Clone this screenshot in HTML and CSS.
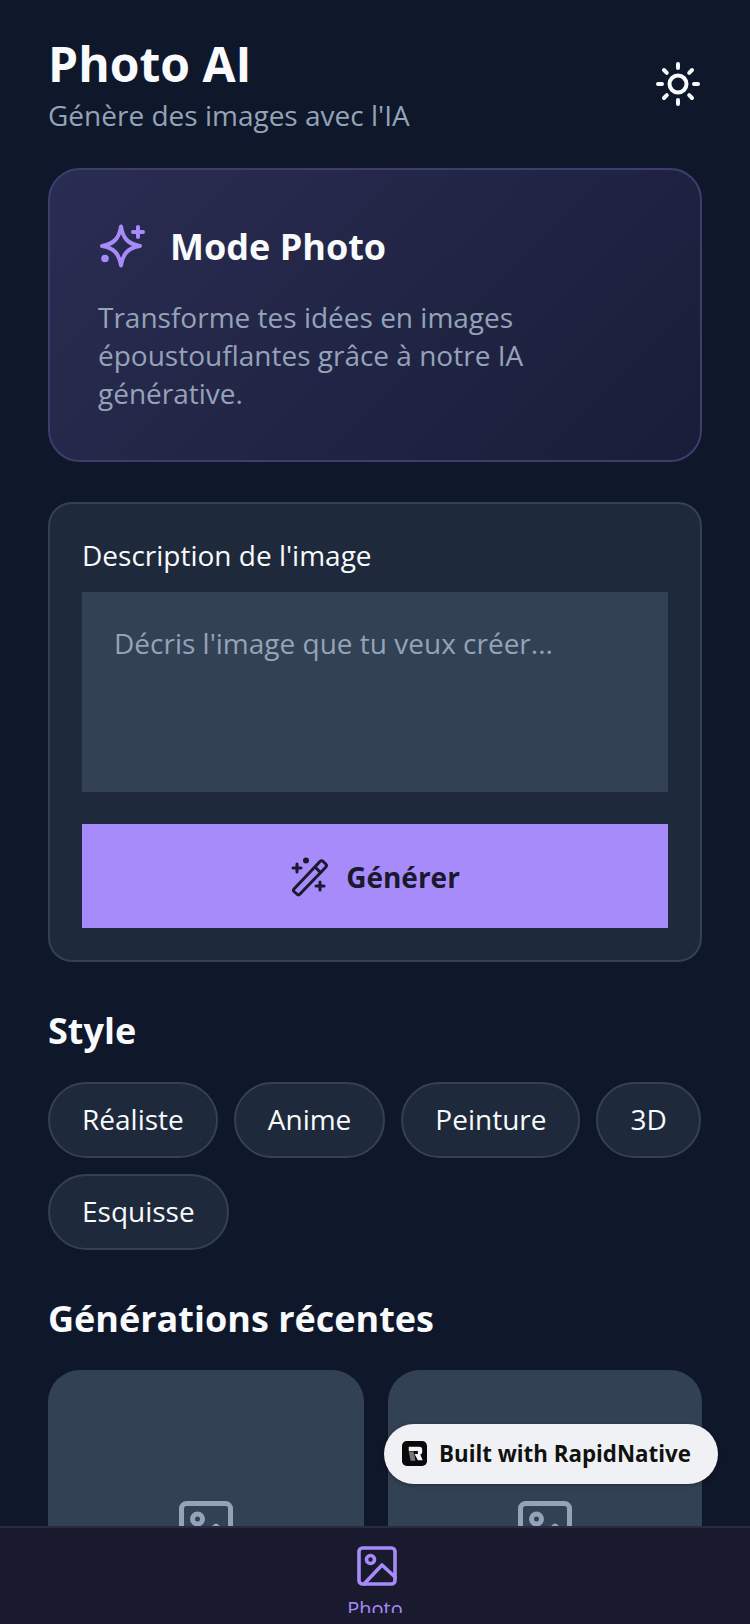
FILE: index.html
```html
<!DOCTYPE html>
<html lang="fr">
<head>
    <meta charset="UTF-8">
    <meta name="viewport" content="width=device-width, initial-scale=1.0">
    <title>Photo AI</title>
    <link rel="stylesheet" href="styles.css">
</head>
<body>
    <div class="app">
        <main class="content">
            <header class="header">
                <div>
                    <h1 class="title">Photo AI</h1>
                    <p class="subtitle">Génère des images avec l'IA</p>
                </div>
                <svg class="sun-icon" viewBox="0 0 48 48" fill="none" stroke="#f8fafc" stroke-width="4" stroke-linecap="round">
                    <circle cx="24" cy="24" r="8.500"/>
                    <path d="M24 4v4M24 40v4M4 24h4M40 24h4M10 10l2.800 2.800M35.200 35.200l2.800 2.800M10 38l2.800-2.800M35.200 12.800l2.800-2.800"/>
                </svg>
            </header>

            <section class="hero">
                <div class="hero-head">
                    <svg class="spark-icon" viewBox="0 0 48 48" fill="none" stroke="#a78bfa" stroke-width="4" stroke-linecap="round" stroke-linejoin="round">
                        <path d="M23 3.500c2 12 7 17.500 19 19.500-12 2-17 7.500-19 19.500-2-12-7-17.500-19-19.500 12-2 17-7.500 19-19.500z"/>
                        <path d="M40 4v10M35 9h10"/>
                        <circle cx="7" cy="35.500" r="1.800" fill="#a78bfa"/>
                    </svg>
                    <h2 class="hero-title">Mode Photo</h2>
                </div>
                <p class="hero-text">Transforme tes idées en images époustouflantes grâce à notre IA générative.</p>
            </section>

            <section class="prompt-card">
                <label class="prompt-label">Description de l'image</label>
                <div class="prompt-input">Décris l'image que tu veux créer...</div>
                <button class="generate-btn">
                    <svg class="wand-icon" viewBox="0 0 40 40" fill="none" stroke="#1a1a2e" stroke-width="3" stroke-linecap="round" stroke-linejoin="round">
                        <path d="M4 32L30 4.500c1-1 2.200-1 3.200 0l2.500 2.500c1 1 1 2.200 0 3.200L10 37c-1 1-2.200 1-3.200 0l-2.800-2.500c-.8-.8-.8-1.700 0-2.500z"/>
                        <path d="M25 10l5.500 5.500"/>
                        <path d="M7 7v8M3 11h8M30 25v8M26 29h8"/>
                        <circle cx="16" cy="3.500" r="1.500" fill="#1a1a2e"/>
                    </svg>
                    <span>Générer</span>
                </button>
            </section>

            <h2 class="section-title style-title">Style</h2>
            <div class="chips">
                <span class="chip">Réaliste</span>
                <span class="chip">Anime</span>
                <span class="chip">Peinture</span>
                <span class="chip">3D</span>
                <span class="chip">Esquisse</span>
            </div>

            <h2 class="section-title recent-title">Générations récentes</h2>
            <div class="recent-grid">
                <div class="recent-card">
                    <svg class="thumb-icon" viewBox="0 0 54 54" fill="none" stroke="#94a3b8" stroke-width="5" stroke-linejoin="round">
                        <rect x="2.500" y="2.500" width="49" height="49" rx="5"/>
                        <circle cx="18.500" cy="18" r="5"/>
                        <path d="M8 50l29-25 15 13"/>
                    </svg>
                </div>
                <div class="recent-card">
                    <svg class="thumb-icon" viewBox="0 0 54 54" fill="none" stroke="#94a3b8" stroke-width="5" stroke-linejoin="round">
                        <rect x="2.500" y="2.500" width="49" height="49" rx="5"/>
                        <circle cx="18.500" cy="18" r="5"/>
                        <path d="M8 50l29-25 15 13"/>
                    </svg>
                </div>
            </div>
        </main>

        <div class="built-badge">
            <span class="built-logo">
                <svg viewBox="0 0 26 26" width="25" height="25">
                    <rect width="26" height="26" rx="5" fill="#0a0a0a"/>
                    <path d="M7 6h11c2 0 3 1 3 3v2.500c0 1.500-1 2.300-2 2.500l2.500 6h-5L13 13.500h3.500V10.500H7z" fill="#f5f5f5"/>
                    <path d="M7 11h5l2 9.500H9z" fill="#777"/>
                </svg>
            </span>
            <span>Built with RapidNative</span>
        </div>

        <nav class="tabbar">
            <svg class="tab-icon" viewBox="0 0 40 40" fill="none" stroke="#a78bfa" stroke-width="3.600" stroke-linecap="round" stroke-linejoin="round">
                <rect x="2" y="2" width="36" height="36" rx="3.500"/>
                <circle cx="13.500" cy="13.500" r="4"/>
                <path d="M7 38l18-19 13 12"/>
            </svg>
            <span class="tab-label">Photo</span>
        </nav>
    </div>
</body>
</html>
```

FILE: styles.css
```css
* {
    box-sizing: border-box;
}
body {
    margin: 0;
    background: #0f172a;
    font-family: "Open Sans", "Noto Sans", sans-serif;
}
.app {
    position: relative;
    width: 750px;
    height: 1624px;
    display: flex;
    flex-direction: column;
    overflow: hidden;
}
.content {
    flex: 1;
    min-height: 0;
    overflow: hidden;
    padding: 32px 48px 0;
}
.header {
    display: flex;
    justify-content: space-between;
    align-items: center;
}
.title {
    margin: 0;
    font-size: 48px;
    line-height: 64px;
    font-weight: 700;
    color: #f8fafc;
}
.subtitle {
    margin: 0;
    font-size: 28px;
    line-height: 38px;
    color: #94a3b8;
}
.sun-icon {
    width: 48px;
    height: 48px;
    margin-top: 2px;
}
.hero {
    margin-top: 34px;
    height: 294px;
    padding: 53px 48px 0;
    border: 2px solid #3c3e6c;
    border-radius: 32px;
    background: linear-gradient(135deg, #2a2d52, #191d38);
}
.hero-head {
    display: flex;
    align-items: center;
    gap: 24px;
}
.spark-icon {
    width: 48px;
    height: 48px;
}
.hero-title {
    margin: 0;
    font-size: 36px;
    line-height: 48px;
    font-weight: 700;
    color: #f8fafc;
}
.hero-text {
    margin: 27px 0 0;
    font-size: 28px;
    line-height: 38px;
    color: #94a3b8;
}
.prompt-card {
    margin-top: 40px;
    height: 460px;
    padding: 31px 32px 32px;
    border: 2px solid #334155;
    border-radius: 24px;
    background: #1e293b;
}
.prompt-label {
    display: block;
    font-size: 28px;
    line-height: 40px;
    color: #f8fafc;
}
.prompt-input {
    margin-top: 17px;
    height: 200px;
    padding: 32px;
    background: #334155;
    font-size: 28px;
    line-height: 38px;
    color: #94a3b8;
}
.generate-btn {
    width: 100%;
    height: 104px;
    margin-top: 32px;
    display: flex;
    align-items: center;
    justify-content: center;
    gap: 16px;
    padding: 2px 0 0;
    border: 0;
    background: #a78bfa;
    font-family: inherit;
    font-size: 28px;
    font-weight: 700;
    color: #1a1a2e;
}
.wand-icon {
    width: 40px;
    height: 40px;
}
.section-title {
    margin: 0;
    font-size: 36px;
    line-height: 48px;
    font-weight: 700;
    color: #f8fafc;
}
.style-title {
    margin-top: 45px;
}
.chips {
    margin-top: 27px;
    display: flex;
    flex-wrap: wrap;
    gap: 16px;
}
.chip {
    height: 76px;
    padding: 0 32px 2px;
    display: flex;
    align-items: center;
    border: 2px solid #334155;
    border-radius: 38px;
    background: #1e293b;
    font-size: 28px;
    color: #f8fafc;
}
.recent-title {
    margin-top: 45px;
}
.recent-grid {
    margin-top: 27px;
    display: grid;
    grid-template-columns: 316px 314px;
    gap: 24px;
}
.recent-card {
    height: 316px;
    padding-top: 131px;
    display: flex;
    justify-content: center;
    border-radius: 32px;
    background: #334155;
}
.thumb-icon {
    width: 54px;
    height: 54px;
}
.built-badge {
    position: absolute;
    left: 384px;
    top: 1424px;
    width: 334px;
    height: 60px;
    display: flex;
    align-items: center;
    gap: 12px;
    padding: 0 0 2px 18px;
    border-radius: 30px;
    background: #eff1f4;
    box-shadow: 0 1px 4px rgba(0, 0, 0, 0.35);
    font-size: 22.3px;
    font-weight: 700;
    color: #111;
}
.built-logo {
    display: flex;
}
.tabbar {
    height: 98px;
    flex-shrink: 0;
    display: flex;
    flex-direction: column;
    align-items: center;
    padding-top: 18px;
    border-top: 2px solid #2a2a42;
    background: #1a1a2e;
}
.tab-icon {
    width: 40px;
    height: 40px;
    margin-left: 3px;
}
.tab-label {
    height: 21px;
    margin-top: 6px;
    overflow: hidden;
    font-size: 20px;
    line-height: 34px;
    color: #a78bfa;
}
```
